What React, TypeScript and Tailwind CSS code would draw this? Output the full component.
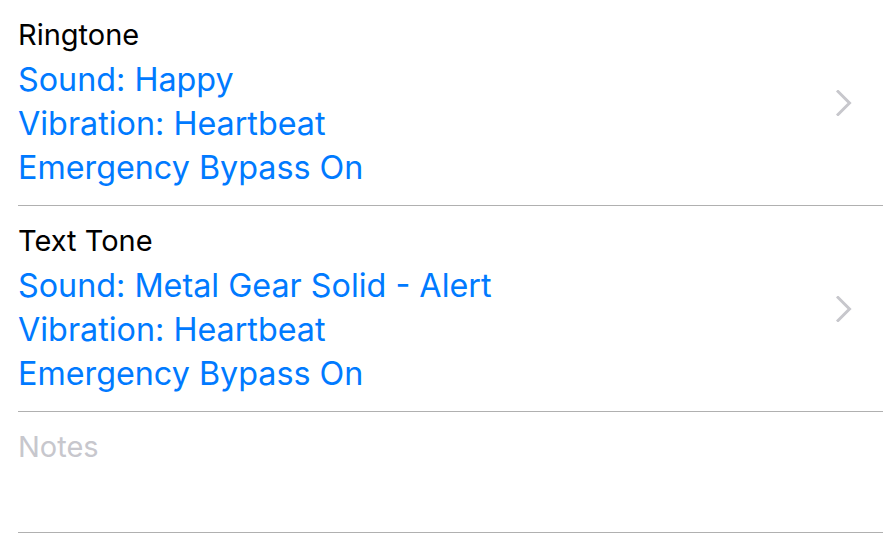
import { ReactNode } from "react";

const Chevron = () => (
  <svg width="16" height="26" viewBox="0 0 16 26" fill="none" className="shrink-0">
    <path d="M2 1.5 L13.5 13 L2 24.5" stroke="#c7c7cc" strokeWidth="3" strokeLinecap="square" />
  </svg>
);

const ToneRow = ({ title, lines }: { title: string; lines: string[] }) => (
  <div className="flex items-center border-b border-[#b0b0b0] pr-[31px]">
    <div className="flex-1 pt-[20px] pb-[15px]">
      <div className="text-[29px] leading-[30px] text-black">{title}</div>
      <div className="mt-[8px]">
        {lines.map((l) => (
          <div key={l} className="text-[32.3px] leading-[44px] text-[#007aff]">
            {l}
          </div>
        ))}
      </div>
    </div>
    <Chevron />
  </div>
);

const Section = ({ children }: { children: ReactNode }) => <div className="ml-[18px]">{children}</div>;

export default function App() {
  return (
    <div className="w-[883px] h-[537px] bg-white overflow-hidden" style={{ fontFamily: "Inter, 'Noto Sans', sans-serif" }}>
      <Section>
        <ToneRow title="Ringtone" lines={["Sound: Happy", "Vibration: Heartbeat", "Emergency Bypass On"]} />
        <ToneRow
          title="Text Tone"
          lines={["Sound: Metal Gear Solid - Alert", "Vibration: Heartbeat", "Emergency Bypass On"]}
        />
        <div className="h-[121px] border-b border-[#b0b0b0] pt-[20px]">
          <div className="text-[29px] leading-[30px] text-[#c7c7cd]">Notes</div>
        </div>
      </Section>
    </div>
  );
}
